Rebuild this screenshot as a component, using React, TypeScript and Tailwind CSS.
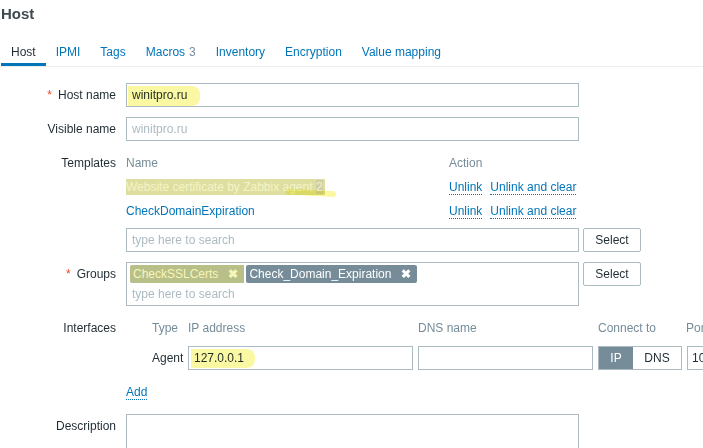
import React from 'react';

const Label = ({ children, required }: { children: React.ReactNode; required?: boolean }) => (
  <div className="w-[116px] shrink-0 text-right leading-[24px] text-[#1f2c33]">
    {required && <span className="text-[#e54a2b] mr-[6px]">*</span>}
    {children}
  </div>
);

const Highlight = ({ className }: { className: string }) => (
  <span className={`absolute pointer-events-none mix-blend-multiply bg-[#fbf8a4] ${className}`} />
);

const tabs = ['IPMI', 'Tags', 'Macros', 'Inventory', 'Encryption', 'Value mapping'];

const App: React.FC = () => {
  return (
    <div className="w-[703px] h-[448px] overflow-hidden bg-white text-[12px] text-[#1f2c33]" style={{ fontFamily: '"Liberation Sans", Arial, sans-serif' }}>
      <div className="h-[29px] flex items-center pl-[1px] text-[15px] font-bold text-[#3f4a50]">Host</div>

      <div className="mt-[8px] flex h-[30px] border-b border-[#ebeef0]">
        <div className="px-[10px] flex items-center border-b-[3px] border-[#0275b8] ml-[1px] pt-[3px] text-[#1f2c33]">Host</div>
        {tabs.map((t) => (
          <div key={t} className="px-[10px] flex items-center pt-[3px] pb-[3px] text-[#0275b8]">
            {t}
            {t === 'Macros' && <span className="ml-[4px] text-[#768d99]">3</span>}
          </div>
        ))}
      </div>

      <div className="pt-[16px] flex flex-col">
        {/* Host name */}
        <div className="flex gap-[10px]">
          <Label required>Host name</Label>
          <div className="relative w-[453px] h-[24px] border border-[#acbbc2] px-[5px] leading-[22px]">
            winitpro.ru
            <Highlight className="left-[1px] top-[2px] w-[72px] h-[20px] rounded-r-[8px]" />
          </div>
        </div>

        {/* Visible name */}
        <div className="flex gap-[10px] mt-[10px]">
          <Label>Visible name</Label>
          <div className="w-[453px] h-[24px] border border-[#acbbc2] px-[5px] leading-[22px] text-[#acbbc2]">winitpro.ru</div>
        </div>

        {/* Templates */}
        <div className="flex gap-[10px] mt-[10px]">
          <Label>Templates</Label>
          <div className="flex flex-col">
            <div className="flex w-[453px] h-[24px] items-center text-[#768d99]">
              <div className="w-[323px]">Name</div>
              <div>Action</div>
            </div>
            <div className="flex w-[453px] h-[24px] items-center">
              <div className="w-[323px] relative">
                <span className="relative bg-[#dedea0] text-[#f4f4c8] pr-[2px] py-[1px]">
                  Website certificate by Zabbix agent <span className="bg-[#cfcfa6]">2</span>
                </span>
                <Highlight className="left-[160px] top-[12px] w-[50px] h-[6px] rounded-[6px] rotate-[3deg]" />
              </div>
              <div className="flex gap-[8px] text-[#0275b8]">
                <span className="border-b border-dotted border-[#0275b8] leading-[14px]">Unlink</span>
                <span className="border-b border-dotted border-[#0275b8] leading-[14px]">Unlink and clear</span>
              </div>
            </div>
            <div className="flex w-[453px] h-[24px] items-center">
              <div className="w-[323px] text-[#0275b8]">CheckDomainExpiration</div>
              <div className="flex gap-[8px] text-[#0275b8]">
                <span className="border-b border-dotted border-[#0275b8] leading-[14px]">Unlink</span>
                <span className="border-b border-dotted border-[#0275b8] leading-[14px]">Unlink and clear</span>
              </div>
            </div>
            <div className="flex gap-[4px] mt-[5px]">
              <div className="w-[453px] h-[24px] border border-[#acbbc2] px-[5px] leading-[22px] text-[#acbbc2]">type here to search</div>
              <button className="w-[58px] h-[24px] border border-[#acbbc2] rounded-[2px] text-[#1f2c33]">Select</button>
            </div>
          </div>
        </div>

        {/* Groups */}
        <div className="flex gap-[10px] mt-[10px]">
          <Label required>Groups</Label>
          <div className="flex gap-[4px] items-start">
            <div className="w-[453px] h-[44px] border border-[#acbbc2] px-[3px] pt-[2px]">
              <div className="flex gap-[2px]">
                <span className="relative flex items-center h-[18px] bg-[#b9bf88] text-[#f6f6b8] pl-[3px] pr-[6px] rounded-l-[2px]">
                  CheckSSLCerts
                  <span className="ml-[10px] text-[12px] font-bold">✖</span>
                </span>
                <span className="flex items-center h-[18px] bg-[#768d99] text-white pl-[3px] pr-[6px] rounded-[2px]">
                  Check_Domain_Expiration
                  <span className="ml-[10px] text-[12px] font-bold">✖</span>
                </span>
              </div>
              <div className="pl-[2px] leading-[22px] text-[#acbbc2]">type here to search</div>
            </div>
            <button className="w-[58px] h-[24px] border border-[#acbbc2] rounded-[2px] text-[#1f2c33]">Select</button>
          </div>
        </div>

        {/* Interfaces */}
        <div className="flex gap-[10px] mt-[10px]">
          <Label>Interfaces</Label>
          <div className="flex flex-col pl-[26px]">
            <div className="flex h-[24px] items-center text-[#768d99]">
              <div className="w-[36px]">Type</div>
              <div className="w-[230px]">IP address</div>
              <div className="w-[180px]">DNS name</div>
              <div className="w-[88px]">Connect to</div>
              <div>Port</div>
            </div>
            <div className="flex h-[24px] items-center mt-[6px]">
              <div className="w-[36px] text-[#1f2c33]">Agent</div>
              <div className="relative w-[225px] h-[24px] border border-[#acbbc2] px-[5px] leading-[22px]">
                127.0.0.1
                <Highlight className="left-[2px] top-[2px] w-[64px] h-[19px] rounded-r-[8px]" />
              </div>
              <div className="ml-[5px] w-[175px] h-[24px] border border-[#acbbc2]"></div>
              <div className="ml-[5px] flex h-[24px] border border-[#acbbc2]">
                <div className="w-[34px] flex items-center justify-center bg-[#768d99] text-white">IP</div>
                <div className="w-[48px] flex items-center justify-center">DNS</div>
              </div>
              <div className="ml-[5px] w-[60px] h-[24px] border border-[#acbbc2] px-[4px] leading-[22px] shrink-0">10050</div>
            </div>
          </div>
        </div>

        {/* Add */}
        <div className="flex gap-[10px] mt-[10px]">
          <div className="w-[116px] shrink-0" />
          <div className="h-[24px] flex items-center">
            <span className="text-[#0275b8] border-b border-dotted border-[#0275b8] leading-[14px]">Add</span>
          </div>
        </div>

        {/* Description */}
        <div className="flex gap-[10px] mt-[10px]">
          <Label>Description</Label>
          <div className="w-[453px] h-[60px] border border-[#acbbc2]"></div>
        </div>
      </div>
    </div>
  );
};

export default App;
